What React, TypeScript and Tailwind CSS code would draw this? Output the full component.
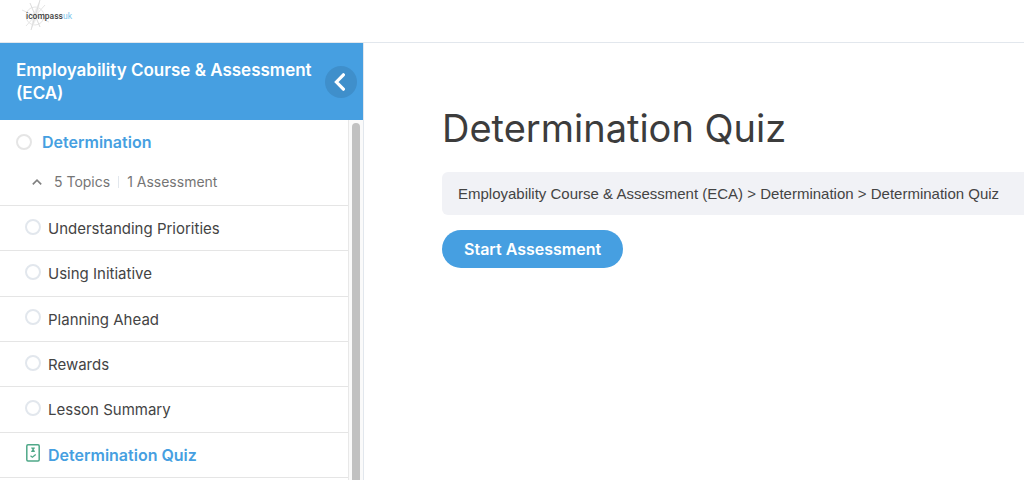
const topics = [
  "Understanding Priorities",
  "Using Initiative",
  "Planning Ahead",
  "Rewards",
  "Lesson Summary",
];

function Logo() {
  return (
    <a href="#" aria-label="icompass uk" className="block">
      <svg width="60" height="34" viewBox="0 0 60 34">
        <g fill="none" stroke="#e6e6e6" strokeWidth="1">
          <circle cx="15" cy="16" r="9" />
          <path d="M2 10 L29 22 M6 26 L25 5" />
        </g>
        <path d="M20 0 L18 16 L11 30 L13 14 Z" fill="#efefef" />
        <path d="M20 0 L11 30 M10 3 L20 27" stroke="#dcdcdc" strokeWidth="1" />
        <text x="6" y="19" fontFamily="'Roboto', sans-serif" fontSize="8.5" fontWeight="500" fill="#3f3f3f">
          <tspan>icompass</tspan>
          <tspan fill="#7cc4ea" fontWeight="400">uk</tspan>
        </text>
      </svg>
    </a>
  );
}

function QuizIcon() {
  return (
    <svg width="14" height="18" viewBox="0 0 14 18" fill="none" stroke="#4fa888" className="shrink-0">
      <rect x="0.8" y="0.8" width="12.4" height="16.2" rx="1.2" strokeWidth="1.5" />
      <path d="M5.2 4 H8.8 M5.2 7.3 H8.8 M6 4 L8.2 7.3 M8.2 4 L6 7.3" strokeWidth="1.2" />
      <path d="M4.5 11.7 L6.4 13.2 L9.7 10.5" strokeWidth="1.3" />
    </svg>
  );
}

function Sidebar() {
  return (
    <aside className="flex w-[364px] shrink-0 flex-col border-r border-[#e2e7ed]">
      <div className="flex items-center justify-between bg-[#469fe1] pt-4 pr-[6px] pb-[15px] pl-4">
        <a href="#" className="flex-1 text-[17px] leading-[23px] font-semibold text-white">
          Employability Course &amp; Assessment (ECA)
        </a>
        <button
          type="button"
          aria-label="Collapse sidebar"
          className="flex size-8 shrink-0 items-center justify-center rounded-full bg-[#3f8fcb]"
        >
          <svg width="12" height="18" viewBox="0 0 12 18" fill="none" stroke="white" strokeWidth="3.2" className="mr-1">
            <path d="M10.4 1.8 L3.4 9 L10.4 16.2" strokeLinecap="round" strokeLinejoin="miter" />
          </svg>
        </button>
      </div>

      <div className="flex flex-1">
        <nav className="flex-1 border-r border-[#e8e8e8]">
          <a href="#" className="flex items-center gap-[10px] pt-3 pl-4 text-base leading-5 font-semibold text-[#469fe1]">
            <span className="size-4 shrink-0 rounded-full border-2 border-[#e5e5e5]" />
            Determination
          </a>
          <button type="button" className="flex items-center pt-5 pb-[13px] pl-8 text-sm leading-5 text-[#757575]">
            <svg width="10" height="6" viewBox="0 0 10 6" fill="none" stroke="#808080" strokeWidth="1.6" className="mr-3">
              <path d="M0.8 5.4 L5 1.2 L9.2 5.4" />
            </svg>
            <span>5 Topics</span>
            <span className="mx-2 h-3 w-px bg-[#e2e7ed]" />
            <span>1 Assessment</span>
          </button>

          <ul className="grid min-h-[273px] auto-rows-fr border-b border-[#e5e5e5]">
            {topics.map((topic) => (
              <li key={topic} className="flex border-t border-[#e5e5e5]">
                <a href="#" className="flex flex-1 items-center gap-[7px] pt-[2px] pl-[25px] text-[15px] leading-5 text-[#444444]">
                  <span className="mb-[5px] size-4 shrink-0 rounded-full border-2 border-[#e2e7ed]" />
                  {topic}
                </a>
              </li>
            ))}
            <li className="flex border-t border-[#e5e5e5]">
              <a href="#" className="flex flex-1 items-center gap-2 pl-[26px] text-base leading-5 font-semibold text-[#469fe1]">
                <span className="mb-1">
                  <QuizIcon />
                </span>
                Determination Quiz
              </a>
            </li>
          </ul>
        </nav>
        <div className="flex w-[14px] justify-center bg-[#fafafa] pt-[3px]">
          <div className="w-2 rounded-t-full bg-[#c1c1c1]" />
        </div>
      </div>
    </aside>
  );
}

export default function App() {
  return (
    <div className="flex h-screen flex-col overflow-hidden bg-white font-['Inter','Liberation_Sans',sans-serif]">
      <header className="border-b border-[#e2e7ed] pb-2 pl-5">
        <Logo />
      </header>
      <div className="flex flex-1">
        <Sidebar />
        <main className="min-w-0 flex-1 pt-[60px] pl-[78px]">
          <h1 className="text-[38px] leading-[50px] text-[#3c3c3c]">Determination Quiz</h1>
          <div className="mt-[19px] rounded-l-md bg-[#f1f2f6] px-4 pt-3 pb-[11px] font-['Liberation_Sans',sans-serif] text-[15px] leading-5 whitespace-nowrap text-[#444444]">
            <a href="#">Employability Course &amp; Assessment (ECA)</a> &gt; <a href="#">Determination</a> &gt;{" "}
            <a href="#">Determination Quiz</a>
          </div>
          <button
            type="button"
            className="mt-[15px] rounded-full bg-[#469fe1] px-[22px] py-2 text-base leading-[22px] font-semibold text-white"
          >
            Start Assessment
          </button>
        </main>
      </div>
    </div>
  );
}
